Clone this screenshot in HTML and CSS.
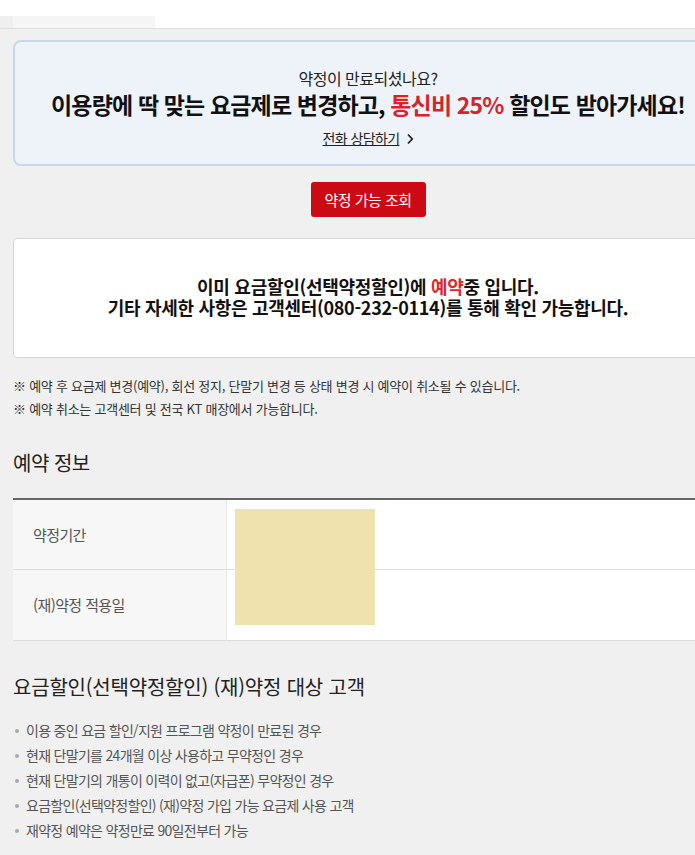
FILE: index.html
```html
<!DOCTYPE html>
<html lang="ko">
<head>
<meta charset="utf-8">
<link rel="stylesheet" href="styles.css">
</head>
<body>
<div class="topbar"></div>
<div class="tabs"><div class="tab"></div></div>
<main class="wrap">
  <section class="banner">
    <p class="banner-sub">약정이 만료되셨나요?</p>
    <h2 class="banner-title">이용량에 딱 맞는 요금제로 변경하고, <em>통신비 25%</em> 할인도 받아가세요!</h2>
    <a class="banner-link" href="#">전화 상담하기</a><svg class="chev" width="8" height="12" viewBox="0 0 8 12"><path d="M2 1.5 L6.2 6 L2 10.5" fill="none" stroke="#222" stroke-width="1.8"/></svg>
  </section>
  <div class="btn-row"><button class="btn">약정 가능 조회</button></div>
  <section class="notice">
    <p>이미 요금할인(선택약정할인)에 <span class="red">예약</span>중 입니다.<br>기타 자세한 사항은 고객센터(080-232-0114)를 통해 확인 가능합니다.</p>
  </section>
  <ul class="notes">
    <li>※ 예약 후 요금제 변경(예약), 회선 정지, 단말기 변경 등 상태 변경 시 예약이 취소될 수 있습니다.</li>
    <li>※ 예약 취소는 고객센터 및 전국 KT 매장에서 가능합니다.</li>
  </ul>
  <h3 class="sec-title">예약 정보</h3>
  <div class="table-wrap">
    <table class="info">
      <tr><th>약정기간</th><td></td></tr>
      <tr class="row2"><th>(재)약정 적용일</th><td></td></tr>
    </table>
    <div class="mask"></div>
  </div>
  <h3 class="sec-title sec2">요금할인(선택약정할인) (재)약정 대상 고객</h3>
  <ul class="bullets">
    <li>이용 중인 요금 할인/지원 프로그램 약정이 만료된 경우</li>
    <li>현재 단말기를 24개월 이상 사용하고 무약정인 경우</li>
    <li>현재 단말기의 개통이 이력이 없고(자급폰) 무약정인 경우</li>
    <li>요금할인(선택약정할인) (재)약정 가입 가능 요금제 사용 고객</li>
    <li>재약정 예약은 약정만료 90일전부터 가능</li>
  </ul>
</main>
</body>
</html>
```
FILE: styles.css
```css
* { box-sizing: border-box; }
html, body { margin: 0; padding: 0; }
body {
  background: #f0f0f0;
  font-family: "Noto Sans CJK KR", "Noto Sans", sans-serif;
  color: #111;
  overflow: hidden;
  width: 695px;
  height: 855px;
}
.topbar { height: 16px; background: #fff; }
.tabs {
  height: 13px;
  background: #fff;
  border-bottom: 1px solid #dedede;
  display: flex;
}
.tabs::before { content: ""; width: 13px; background: #efefef; }
.tab { width: 142px; background: #f5f5f5; }
.wrap {
  margin-left: 13px;
  width: 710px;
}
.banner {
  margin-top: 11px;
  height: 126px;
  background: #eef3fa;
  border: 2px solid #c8d7eb;
  border-radius: 8px;
  text-align: center;
  padding-top: 25px;
}
.banner-sub {
  margin: 0;
  font-size: 16px;
  line-height: 22px;
  color: #222;
  letter-spacing: -0.5px;
}
.banner-title {
  margin: 0;
  font-size: 23px;
  line-height: 30px;
  font-weight: 700;
  letter-spacing: -0.85px;
  color: #111;
}
.banner-title em { font-style: normal; color: #d3262c; }
.banner-link {
  display: inline-block;
  margin-top: 10px;
  font-size: 14px;
  line-height: 18px;
  color: #222;
  text-decoration: underline;
  letter-spacing: -0.6px;
}
.chev { margin-left: 6px; vertical-align: -1px; }
.btn-row { display: flex; justify-content: center; margin-top: 16px; }
.btn {
  width: 115px;
  height: 35px;
  border: 0;
  border-radius: 3px;
  background: #cc0a14;
  color: #fff;
  font-family: inherit;
  font-size: 15px;
  letter-spacing: -0.5px;
  padding: 0;
}
.notice {
  margin-top: 21px;
  height: 120px;
  background: #fff;
  border: 1px solid #d6d6d6;
  border-radius: 4px;
  display: flex;
  align-items: center;
  justify-content: center;
}
.notice p {
  margin: 0;
  text-align: center;
  font-size: 18px;
  line-height: 21px;
  font-weight: 700;
  letter-spacing: -0.3px;
  color: #111;
  padding-bottom: 3px;
}
.red { color: #e0262c; }
.notes {
  list-style: none;
  margin: 16px 0 0;
  padding: 0;
  font-size: 13px;
  line-height: 23px;
  color: #333;
  letter-spacing: -0.25px;
}
.sec-title {
  margin: 29px 0 0;
  font-size: 20px;
  line-height: 28px;
  font-weight: 400;
  color: #222;
  letter-spacing: -0.5px;
}
.table-wrap { position: relative; margin-top: 21px; }
.info {
  width: 100%;
  border-collapse: collapse;
  border-top: 2px solid #666;
  border-bottom: 1px solid #dcdcdc;
}
.info th {
  width: 213px;
  height: 70px;
  background: #f7f7f7;
  text-align: left;
  padding: 0 0 0 20px;
  font-weight: 400;
  font-size: 15px;
  color: #555;
  letter-spacing: -0.6px;
  border-right: 1px solid #e8e8e8;
}
.info .row2 th { height: 71px; }
.info td { background: #fff; }
.info tr + tr th, .info tr + tr td { border-top: 1px solid #dcdcdc; }
.mask {
  position: absolute;
  left: 222px;
  top: 11px;
  width: 140px;
  height: 116px;
  background: #efe2ae;
}
.sec2 { margin-top: 32px; letter-spacing: -0.2px; }
.bullets {
  list-style: none;
  margin: 17px 0 0;
  padding: 0;
  font-size: 14px;
  line-height: 25px;
  color: #555;
  letter-spacing: -0.7px;
}
.bullets li { position: relative; padding-left: 13px; }
.bullets li::before {
  content: "";
  position: absolute;
  left: 2px;
  top: 11px;
  width: 4px;
  height: 4px;
  border-radius: 50%;
  background: #aaa;
}
```
